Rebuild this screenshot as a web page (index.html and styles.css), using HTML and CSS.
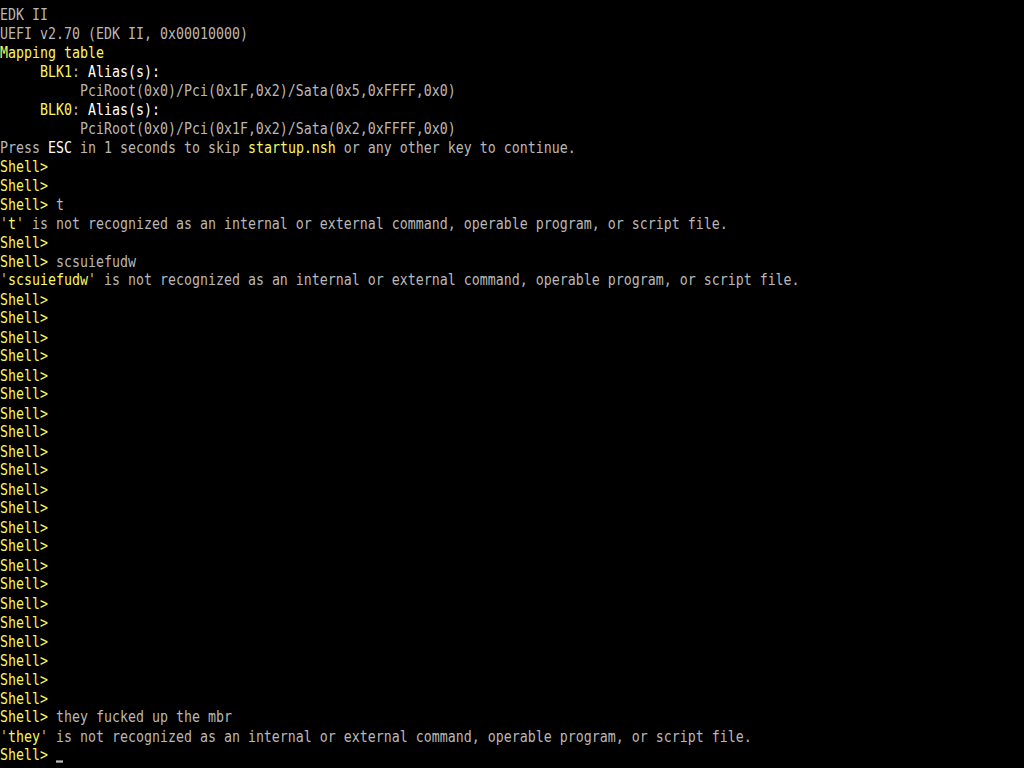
FILE: index.html
```html
<!DOCTYPE html>
<html lang="en">
<head>
  <meta charset="UTF-8" />
  <title>UEFI Interactive Shell</title>
  <meta name="viewport" content="width=device-width, initial-scale=1" />
  <link rel="stylesheet" href="styles.css">
</head>
<body>
  <div class="screen">
    <div class="line">EDK II</div>
    <div class="line">UEFI v2.70 (EDK II, 0x00010000)</div>
    <div class="line hi">Mapping table</div>
    <div class="line">     <span class="hi">BLK1</span>: <span class="wh">Alias(s):</span></div>
    <div class="line">          PciRoot(0x0)/Pci(0x1F,0x2)/Sata(0x5,0xFFFF,0x0)</div>
    <div class="line">     <span class="hi">BLK0</span>: <span class="wh">Alias(s):</span></div>
    <div class="line">          PciRoot(0x0)/Pci(0x1F,0x2)/Sata(0x2,0xFFFF,0x0)</div>
    <div class="line">Press <span class="wh">ESC</span> in 1 seconds to skip <span class="hi">startup.nsh</span> or any other key to continue.</div>
    <div class="line"><span class="hi">Shell&gt;</span></div>
    <div class="line"><span class="hi">Shell&gt;</span></div>
    <div class="line"><span class="hi">Shell&gt;</span> t</div>
    <div class="line">'<span class="hi">t</span>' is not recognized as an internal or external command, operable program, or script file.</div>
    <div class="line"><span class="hi">Shell&gt;</span></div>
    <div class="line"><span class="hi">Shell&gt;</span> scsuiefudw</div>
    <div class="line">'<span class="hi">scsuiefudw</span>' is not recognized as an internal or external command, operable program, or script file.</div>
    <div id="emptyPrompts"></div>
    <div class="line"><span class="hi">Shell&gt;</span> they fucked up the mbr</div>
    <div class="line">'<span class="hi">they</span>' is not recognized as an internal or external command, operable program, or script file.</div>
    <div class="line"><span class="hi">Shell&gt;</span> <span class="cursor"></span></div>
  </div>

  <script>
    // the user kept hitting enter: 22 empty prompts
    const holder = document.getElementById("emptyPrompts");
    for (let i = 0; i < 22; i++) {
      const line = document.createElement("div");
      line.className = "line";
      line.innerHTML = '<span class="hi">Shell&gt;</span>';
      holder.appendChild(line);
    }
  </script>
</body>
</html>
```

FILE: styles.css
```css
html, body {
  margin: 0;
  background: #000;
}

body {
  width: 1024px;
  height: 768px;
  overflow: hidden;
}

/* 8x19 text cells: 8px advance, stretched to look like the firmware font */
.screen {
  margin-top: 5.5px;
  font-family: "DejaVu Sans Mono", "Liberation Mono", monospace;
  font-size: 13.29px;
  line-height: 16.52px;
  color: #b8b8b8;
  transform: scaleY(1.15);
  transform-origin: top left;
}

.line {
  white-space: pre;
  height: 16.52px;
}

.hi {
  color: #f8f860;
}

.wh {
  color: #ffffff;
}

.cursor {
  display: inline-block;
  width: 7px;
  height: 2px;
  background: #b8b8b8;
  vertical-align: -2px;
}
```
